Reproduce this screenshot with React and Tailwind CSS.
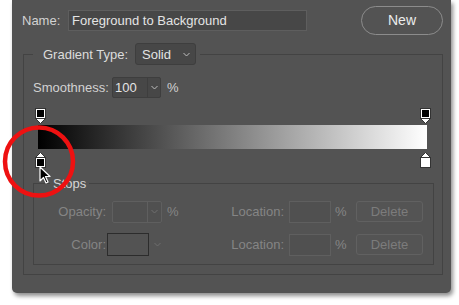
import React from "react";

function Chevron({ className = "" }) {
  return (
    <svg width="7" height="5" viewBox="0 0 7 5" className={className}>
      <polyline points="0.5,1 3.5,4 6.5,1" fill="none" stroke="currentColor" strokeWidth="1" />
    </svg>
  );
}

function TopStop({ fill }) {
  return (
    <svg width="11" height="16" viewBox="0 0 11 16">
      <polygon points="0.5,10.5 10.5,10.5 5.5,15.5" fill="#fff" stroke="#333" strokeWidth="1" />
      <rect x="0.5" y="0.5" width="10" height="10" fill="#fff" stroke="#333" strokeWidth="1" />
      <rect x="2" y="2" width="7" height="7" fill={fill} />
    </svg>
  );
}

function BottomStop({ fill }) {
  return (
    <svg width="11" height="16" viewBox="0 0 11 16">
      <polygon points="0.5,5.5 10.5,5.5 5.5,0.5" fill="#fff" stroke="#333" strokeWidth="1" />
      <rect x="0.5" y="5.5" width="10" height="10" fill="#fff" stroke="#333" strokeWidth="1" />
      <rect x="2" y="7" width="7" height="7" fill={fill} />
    </svg>
  );
}

function LocationGroup() {
  return (
    <div className="flex items-center">
      <div className="w-[60px] text-right text-[#858585]">Location:</div>
      <div className="ml-[5px] w-[42px] h-[22px] border border-[#5f5f5f] bg-[#505050]" />
      <div className="w-[25px] pl-[4px] text-[#858585]">%</div>
      <div className="w-[67px] h-[21px] rounded-[3px] border border-[#616161] bg-[#545454] flex items-center justify-center text-[#7c7c7c]">
        Delete
      </div>
    </div>
  );
}

export default function App() {
  return (
    <div className="relative w-[459px] h-[305px] bg-white overflow-hidden font-['Liberation_Sans',Arial,sans-serif] text-[13px] leading-[15px]">
      <div className="ml-[12px] w-[439px] h-[293px] bg-[#535353] rounded-b-[5px] shadow-[2px_3px_4px_rgba(0,0,0,0.45)] pt-[6px]">
        {/* Name row */}
        <div className="flex items-center h-[29px]">
          <div className="ml-[10px] w-[46px] text-[#d2d2d2]">Name:</div>
          <div className="w-[239px] h-[21px] border border-[#5e5e5e] bg-[#474747] flex items-center pl-[3px] text-[#e4e4e4]">
            Foreground to Background
          </div>
          <div className="ml-[54px] w-[82px] h-[29px] rounded-full border border-[#8c8c8c] flex items-center justify-center text-[#ececec] text-[14px]">
            New
          </div>
        </div>

        {/* Gradient Type group */}
        <fieldset className="mt-[8px] ml-[11px] w-[420px] border border-[#434343] pb-[9px]">
          <legend className="ml-[9px] pl-[10px] pr-[4px]">
            <span className="flex items-center h-[22px]">
              <span className="text-[#dcdcdc]">Gradient Type:</span>
              <span className="ml-[7px] w-[61px] h-[22px] rounded-[3px] border border-[#3e3e3e] bg-[#474747] flex items-center pl-[6px] pr-[5px] text-[#e4e4e4]">
                <span>Solid</span>
                <Chevron className="ml-auto text-[#bdbdbd]" />
              </span>
            </span>
          </legend>

          {/* Smoothness */}
          <div className="mt-[12px] flex items-center h-[21px] pl-[9px]">
            <div className="w-[79px] text-[#d2d2d2]">Smoothness:</div>
            <div className="w-[49px] h-[21px] rounded-[2px] border border-[#3e3e3e] bg-[#474747] flex items-stretch">
              <div className="w-[34px] pl-[2px] flex items-center text-[#e4e4e4]">100</div>
              <div className="flex-1 border-l border-[#3e3e3e] flex items-center justify-center">
                <Chevron className="text-[#bdbdbd]" />
              </div>
            </div>
            <div className="ml-[6px] text-[#d2d2d2]">%</div>
          </div>

          {/* Gradient editor */}
          <div className="mt-[10px] ml-[11px] w-[396px] h-[16px] flex justify-between">
            <TopStop fill="#000" />
            <TopStop fill="#000" />
          </div>
          <div className="mt-[1px] ml-[14px] w-[389px] h-[24px] bg-[linear-gradient(to_right,#000,#fff)]" />
          <div className="mt-[3px] ml-[11px] w-[396px] h-[16px] flex justify-between">
            <BottomStop fill="#000" />
            <BottomStop fill="#fff" />
          </div>

          {/* Stops group */}
          <fieldset className="mt-[8px] ml-[9px] w-[401px] border border-[#434343] pb-[8px]">
            <legend className="ml-[16px] px-[3px] text-[#d6d6d6]">Stops</legend>
            <div className="mt-[9px] flex items-center h-[23px]">
              <div className="w-[190px] flex items-center">
                <div className="w-[72px] text-right text-[#858585]">Opacity:</div>
                <div className="ml-[6px] w-[50px] h-[22px] rounded-[2px] border border-[#5f5f5f] bg-[#505050] flex items-stretch">
                  <div className="w-[34px]" />
                  <div className="flex-1 border-l border-[#5f5f5f] flex items-center justify-center">
                    <Chevron className="text-[#6e6e6e]" />
                  </div>
                </div>
                <div className="ml-[5px] text-[#858585]">%</div>
              </div>
              <LocationGroup />
            </div>
            <div className="mt-[10px] flex items-center h-[23px]">
              <div className="w-[190px] flex items-center">
                <div className="w-[72px] text-right text-[#858585]">Color:</div>
                <div className="ml-[1px] w-[42px] h-[23px] border border-[#2c2c2c] bg-[#535353]" />
                <Chevron className="ml-[5px] text-[#6e6e6e]" />
              </div>
              <LocationGroup />
            </div>
          </fieldset>
        </fieldset>
      </div>

      {/* Red highlight circle */}
      <svg className="absolute left-0 top-0 pointer-events-none" width="459" height="305">
        <circle cx="39" cy="161.5" r="34" fill="none" stroke="#ee1111" strokeWidth="4.5" />
      </svg>

      {/* Mouse cursor */}
      <svg className="absolute left-[39px] top-[166px] pointer-events-none" width="14" height="20" viewBox="0 0 14 20">
        <path d="M1 1 L1 15 L4.5 11.5 L7 17 L9 16 L6.5 10.5 L11 10.5 Z" fill="#000" stroke="#fff" strokeWidth="1.2" strokeLinejoin="round" />
      </svg>
    </div>
  );
}
